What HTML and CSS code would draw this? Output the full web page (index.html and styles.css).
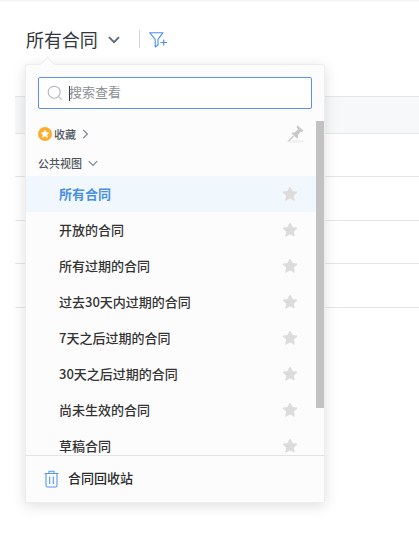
FILE: index.html
```html
<!DOCTYPE html>
<html lang="zh">
<head>
<meta charset="utf-8">
<title>所有合同</title>
<link rel="stylesheet" href="styles.css">
</head>
<body>
<div class="topline"></div>
<header class="bar">
  <span class="title">所有合同</span>
  <svg class="caret" width="12" height="8" viewBox="0 0 12 8"><path d="M1 1.2 6 6.2 11 1.2" fill="none" stroke="#5c6670" stroke-width="1.8"/></svg>
  <span class="divider"></span>
  <svg class="filter" width="20" height="16" viewBox="0 0 20 16"><path d="M.7.7H14L9 7.3V13L6.2 15V7.3Z" fill="none" stroke="#4a90f0" stroke-width="1.1" stroke-linejoin="round"/><path d="M11.5 10.5H18M14.7 7.5V13.5" fill="none" stroke="#4a90f0" stroke-width="1.2"/></svg>
</header>
<div class="table">
  <div class="row head"></div>
  <div class="row r43"></div>
  <div class="row r44"></div>
  <div class="row r43"></div>
  <div class="row r44"></div>
</div>
<div class="popup">
  <div class="arrow"></div>
  <div class="search">
    <svg width="16" height="16" viewBox="0 0 16 16"><circle cx="7.2" cy="7.2" r="6" fill="none" stroke="#b4b8bd" stroke-width="1.1"/><path d="M11.6 11.6 14.6 14.6" stroke="#b4b8bd" stroke-width="1.1"/></svg>
    <span class="cursor"></span><span class="ph">搜索查看</span>
  </div>
  <div class="fav">
    <svg width="14" height="14" viewBox="0 0 14 14"><circle cx="7" cy="7" r="7" fill="#fbae2c"/><path d="M7 2.9 8.2 5.5 11 5.8 8.9 7.7 9.5 10.5 7 9.1 4.5 10.5 5.1 7.7 3 5.8 5.8 5.5Z" fill="#fff" stroke="#fff" stroke-width=".5" stroke-linejoin="round"/></svg>
    <span class="sec">收藏</span>
    <svg class="chev-r" width="7" height="10" viewBox="0 0 7 10"><path d="M1.2 .8 5.4 5 1.2 9.2" fill="none" stroke="#7d858d" stroke-width="1.2"/></svg>
    <svg class="pin" width="22" height="18" viewBox="0 0 22 18"><ellipse cx="11" cy="16.5" rx="10" ry="1.5" fill="#f1f1f1"/><path d="M13.5 .5 19.5 5.5 18 7 16.5 6.7 14 10 14 12.8 13 13.5 7.5 8.5 8.5 7.5 11 7.2 14 4.2 12.5 2Z" fill="#c9c9c9"/><path d="M9.5 11 4.5 16" stroke="#c9c9c9" stroke-width="1.3"/></svg>
  </div>
  <div class="pub">
    <span class="sec">公共视图</span>
    <svg width="10" height="7" viewBox="0 0 10 7"><path d="M.8 1.2 5 5.4 9.2 1.2" fill="none" stroke="#7d858d" stroke-width="1.2"/></svg>
  </div>
  <div class="scroll">
    <ul class="list">
      <li class="item active"><span>所有合同</span><svg class="star" viewBox="0 0 16 16"><use href="#s"/></svg></li>
      <li class="item"><span>开放的合同</span><svg class="star" viewBox="0 0 16 16"><use href="#s"/></svg></li>
      <li class="item"><span>所有过期的合同</span><svg class="star" viewBox="0 0 16 16"><use href="#s"/></svg></li>
      <li class="item"><span>过去30天内过期的合同</span><svg class="star" viewBox="0 0 16 16"><use href="#s"/></svg></li>
      <li class="item"><span>7天之后过期的合同</span><svg class="star" viewBox="0 0 16 16"><use href="#s"/></svg></li>
      <li class="item"><span>30天之后过期的合同</span><svg class="star" viewBox="0 0 16 16"><use href="#s"/></svg></li>
      <li class="item"><span>尚未生效的合同</span><svg class="star" viewBox="0 0 16 16"><use href="#s"/></svg></li>
      <li class="item"><span>草稿合同</span><svg class="star" viewBox="0 0 16 16"><use href="#s"/></svg></li>
    </ul>
    <div class="thumb"></div>
  </div>
  <div class="foot">
    <svg width="15" height="18" viewBox="0 0 15 18"><path d="M.5 3.5H14.5M5 3.5V1.2H10V3.5M2 3.5V15.5Q2 17 3.5 17H11.5Q13 17 13 15.5V3.5M5.7 6.5V14M9.3 6.5V14" fill="none" stroke="#5596f0" stroke-width="1.1"/></svg>
    <span>合同回收站</span>
  </div>
</div>
<svg class="defs" width="0" height="0"><defs><path id="s" d="M8 1.4 10 5.6 14.6 6.2 11.2 9.4 12.1 14 8 11.7 3.9 14 4.8 9.4 1.4 6.2 6 5.6Z" fill="#dcdcdc" stroke="#dcdcdc" stroke-width="1.2" stroke-linejoin="round"/></defs></svg>
</body>
</html>
```
FILE: styles.css
```css
* { box-sizing: border-box; }
html, body { margin: 0; height: 100%; }
body {
  position: relative;
  width: 419px;
  height: 542px;
  overflow: hidden;
  background: #fff;
  font-family: "Noto Sans CJK SC", "Liberation Sans", sans-serif;
  color: #333;
}
.topline { height: 2px; background: linear-gradient(#f0f0f0, #fff); }
.bar {
  display: flex;
  align-items: center;
  height: 52px;
  margin-top: 11px;
  padding-left: 26px;
}
.title { font-size: 18px; line-height: 24px; letter-spacing: -.1px; color: #33383e; }
.caret { margin-left: 10px; margin-top: 2px; }
.divider { width: 1px; height: 18px; background: #d5d5d5; margin-left: 19px; }
.filter { margin-left: 9px; margin-top: 2px; }
.table { margin: 31px 0 0 15px; border-top: 1px solid #e6e6e6; }
.row { border-bottom: 1px solid #e6e6e6; }
.head { height: 37px; background: #f7f8fa; }
.r43 { height: 43px; }
.r44 { height: 44px; }

.popup {
  position: absolute;
  left: 25px;
  top: 64px;
  width: 300px;
  height: 439px;
  display: flex;
  flex-direction: column;
  background: #fcfcfc;
  border: 1px solid #ededed;
  border-radius: 3px 3px 0 0;
  box-shadow: 0 3px 14px rgba(0, 0, 0, .13);
}
.arrow {
  position: absolute;
  left: 16px;
  top: -6px;
  width: 11px;
  height: 11px;
  background: #fcfcfc;
  border-left: 1px solid #ededed;
  border-top: 1px solid #ededed;
  transform: rotate(45deg);
}
.search {
  position: relative;
  display: flex;
  align-items: center;
  flex: none;
  height: 32px;
  margin: 12px 12px 0 12px;
  padding-left: 8px;
  background: #fff;
  border: 1px solid #5b93e8;
  border-radius: 2px;
}
.cursor { width: 1px; height: 15px; background: #333; margin-left: 6px; }
.ph { font-size: 13px; color: #8b8f94; margin-left: -1px; margin-top: -4px; }
.fav {
  position: relative;
  display: flex;
  align-items: center;
  flex: none;
  height: 22px;
  margin-top: 14px;
  padding-left: 12px;
}
.sec { font-size: 11px; font-weight: 500; color: #50565c; }
.fav .sec { margin-left: 2px; }
.chev-r { margin-left: 6px; }
.pin { position: absolute; left: 258px; top: 2px; }
.pub {
  display: flex;
  align-items: center;
  flex: none;
  height: 20px;
  margin-top: 8px;
  padding-left: 12px;
}
.pub svg { margin-left: 6px; }
.scroll { position: relative; flex: 1; margin-top: 3px; clip-path: inset(-56px 0 0 0); }
.list { height: 278px; margin: 0; padding: 0; list-style: none; overflow: hidden; }
.item {
  display: flex;
  align-items: center;
  justify-content: space-between;
  height: 36px;
  padding: 0 18px 0 33px;
  margin-right: 8px;
  font-size: 13px;
  font-weight: 500;
  color: #333;
}
.item > span { margin-top: -1px; }
.item.active { background: #f0f8fe; color: #4a90e2; font-weight: 700; }
.star { width: 16px; height: 16px; }
.thumb {
  position: absolute;
  right: 0;
  top: -55px;
  width: 8px;
  height: 287px;
  background: #c2c2c2;
}
.foot {
  display: flex;
  align-items: center;
  flex: none;
  height: 47px;
  padding-left: 18px;
  border-top: 1px solid #e4e4e4;
  font-size: 13px;
  font-weight: 500;
  color: #2a2a2a;
}
.foot span { margin-left: 9px; margin-top: -4px; }
.defs { position: absolute; }
```
